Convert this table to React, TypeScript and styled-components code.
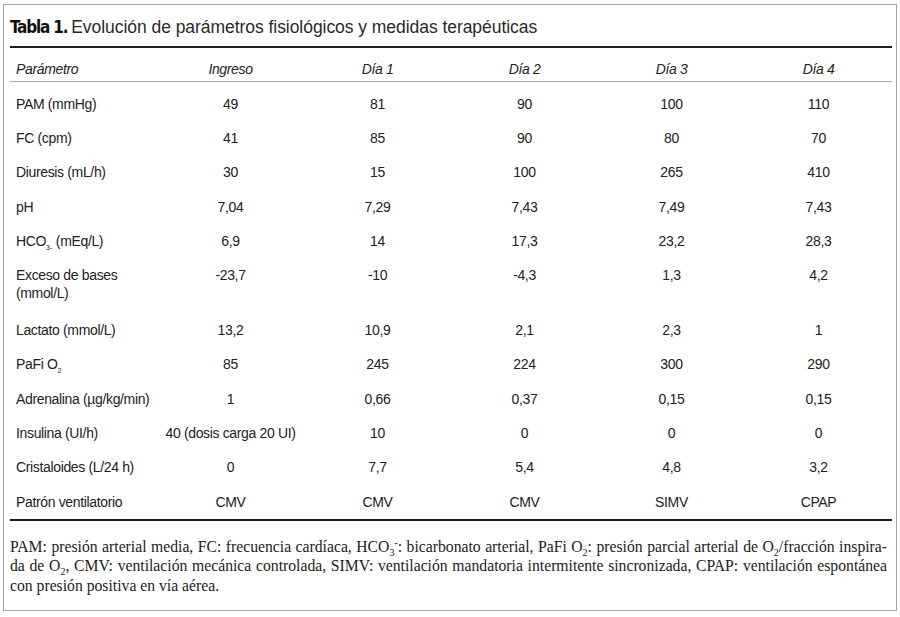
import React from "react";
import styled, { createGlobalStyle } from "styled-components";

const Global = createGlobalStyle`
  html, body { margin: 0; padding: 0; background: #ffffff; }
  body { font-family: "Liberation Sans", Arial, sans-serif; color: #1e1e1e; }
`;

const Frame = styled.div`
  box-sizing: border-box;
  margin: 4px 0 0 3px;
  width: 894px;
  height: 607px;
  border: 1.5px solid #a4a4a4;
  padding: 0 4px 0 6px;
  display: flex;
  flex-direction: column;
`;

const Title = styled.h1`
  margin: 0;
  padding: 11px 0 0 0;
  height: 41px;
  box-sizing: border-box;
  font-weight: 400;
  font-size: 17.5px;
  line-height: 22px;
  letter-spacing: -0.05px;
  color: #2a2a2a;
  white-space: nowrap;
  display: flex;
  align-items: baseline;
  gap: 4px;
`;

const TitleLabel = styled.span`
  font-family: "DejaVu Sans Condensed", "DejaVu Sans", sans-serif;
  font-stretch: condensed;
  font-weight: 700;
  font-size: 17px;
  letter-spacing: -1.2px;
  color: #111;
`;

const Table = styled.table`
  width: 882px;
  border-collapse: collapse;
  table-layout: fixed;
  border-top: 2px solid #1e1e1e;
  border-bottom: 2px solid #1e1e1e;
  font-size: 14px;
  letter-spacing: -0.35px;
`;

const HeadCell = styled.th<{ $left?: boolean }>`
  font-weight: 400;
  font-style: italic;
  text-align: ${(p) => (p.$left ? "left" : "center")};
  padding: ${(p) => (p.$left ? "12px 3px 3px 6px" : "12px 3px 3px 3px")};
  line-height: 18px;
  border-bottom: 1px solid #a8a8a8;
  color: #222;
`;

const BodyRow = styled.tr<{ $tall?: boolean }>`
  td {
    padding-bottom: ${(p) => (p.$tall ? "5.9px" : "3.9px")};
  }
  &:last-child td {
    padding-bottom: 8px;
  }
`;

const Cell = styled.td<{ $left?: boolean }>`
  text-align: ${(p) => (p.$left ? "left" : "center")};
  vertical-align: top;
  padding-top: 12.5px;
  padding-left: ${(p) => (p.$left ? "6px" : "3px")};
  padding-right: 3px;
  line-height: 18px;
  color: #222;
`;

const TinySub = styled.sub`
  font-size: 7px;
  line-height: 0;
  vertical-align: sub;
  letter-spacing: 0;
`;

const Notes = styled.div`
  margin-top: 16px;
  font-family: "Liberation Serif", "Times New Roman", serif;
  font-size: 15.7px;
  line-height: 19.5px;
  color: #222;
  width: 877px;
`;

const NoteLine = styled.div<{ $justify?: boolean }>`
  text-align: ${(p) => (p.$justify ? "justify" : "left")};
  text-align-last: ${(p) => (p.$justify ? "justify" : "left")};
  white-space: nowrap;
`;

const SerifSub = styled.sub`
  font-size: 10px;
  line-height: 0;
  vertical-align: sub;
`;

const SerifSup = styled.sup`
  font-size: 10px;
  line-height: 0;
  vertical-align: super;
`;

type Row = { label: React.ReactNode; values: string[]; tall?: boolean };

const rows: Row[] = [
  { label: "PAM (mmHg)", values: ["49", "81", "90", "100", "110"] },
  { label: "FC (cpm)", values: ["41", "85", "90", "80", "70"] },
  { label: "Diuresis (mL/h)", values: ["30", "15", "100", "265", "410"] },
  { label: "pH", values: ["7,04", "7,29", "7,43", "7,49", "7,43"] },
  {
    label: (
      <>
        HCO<TinySub>3-</TinySub> (mEq/L)
      </>
    ),
    values: ["6,9", "14", "17,3", "23,2", "28,3"],
  },
  {
    label: (
      <>
        Exceso de bases
        <br />
        (mmol/L)
      </>
    ),
    values: ["-23,7", "-10", "-4,3", "1,3", "4,2"],
    tall: true,
  },
  { label: "Lactato (mmol/L)", values: ["13,2", "10,9", "2,1", "2,3", "1"] },
  {
    label: (
      <>
        PaFi O<TinySub>2</TinySub>
      </>
    ),
    values: ["85", "245", "224", "300", "290"],
  },
  { label: "Adrenalina (µg/kg/min)", values: ["1", "0,66", "0,37", "0,15", "0,15"] },
  { label: "Insulina (UI/h)", values: ["40 (dosis carga 20 UI)", "10", "0", "0", "0"] },
  { label: "Cristaloides (L/24 h)", values: ["0", "7,7", "5,4", "4,8", "3,2"] },
  { label: "Patrón ventilatorio", values: ["CMV", "CMV", "CMV", "SIMV", "CPAP"] },
];

const headers = ["Ingreso", "Día 1", "Día 2", "Día 3", "Día 4"];

export default function App() {
  return (
    <>
      <Global />
      <Frame>
        <Title>
          <TitleLabel>Tabla 1.</TitleLabel>
          <span>Evolución de parámetros fisiológicos y medidas terapéuticas</span>
        </Title>
        <Table>
          <thead>
            <tr>
              <HeadCell $left>Parámetro</HeadCell>
              {headers.map((h) => (
                <HeadCell key={h}>{h}</HeadCell>
              ))}
            </tr>
          </thead>
          <tbody>
            {rows.map((r, i) => (
              <BodyRow key={i} $tall={r.tall}>
                <Cell $left>{r.label}</Cell>
                {r.values.map((v, j) => (
                  <Cell key={j}>{v}</Cell>
                ))}
              </BodyRow>
            ))}
          </tbody>
        </Table>
        <Notes>
          <NoteLine $justify>
            PAM: presión arterial media, FC: frecuencia cardíaca, HCO<SerifSub>3</SerifSub>
            <SerifSup>-</SerifSup>: bicarbonato arterial, PaFi O<SerifSub>2</SerifSub>: presión parcial arterial de O
            <SerifSub>2</SerifSub>/fracción inspira-
          </NoteLine>
          <NoteLine $justify>
            da de O<SerifSub>2</SerifSub>, CMV: ventilación mecánica controlada, SIMV: ventilación mandatoria intermitente sincronizada, CPAP: ventilación espontánea
          </NoteLine>
          <NoteLine>con presión positiva en vía aérea.</NoteLine>
        </Notes>
      </Frame>
    </>
  );
}
